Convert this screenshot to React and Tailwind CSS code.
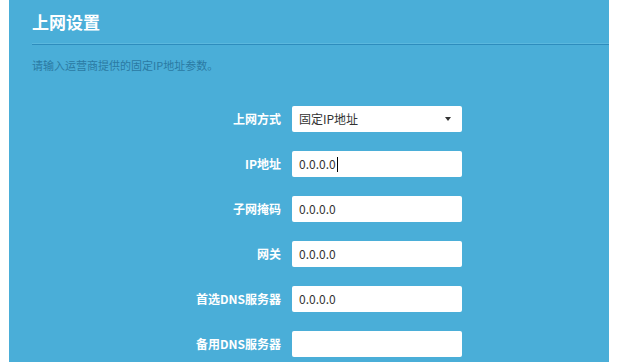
import React from "react";

const font = { fontFamily: '"Noto Sans CJK SC", "Noto Sans", sans-serif' };

function Row({ label, children }) {
  return (
    <div className="flex items-center h-[26px]">
      <div className="w-[249px] pr-0 text-right text-[12px] font-bold text-white leading-none">{label}</div>
      <div className="ml-[11px] w-[170px] h-[26px] bg-white rounded-[2px] flex items-center pl-[7px] text-[12px] text-[#333] relative">
        {children}
      </div>
    </div>
  );
}

export default function App() {
  return (
    <div className="bg-white w-[627px] h-[362px] overflow-hidden" style={font}>
      <div className="ml-[9px] w-[600px] h-[362px] bg-[#4aaed8]">
        <div className="pl-[23px]">
          <div className="h-[43px] flex items-center text-[17px] font-bold text-white tracking-[0px]">上网设置</div>
          <div className="h-[1px] bg-[#5bb8de]"></div>
          <div className="h-[1px] bg-[#2e8dbd]"></div>
          <div className="mt-[12px] text-[11px] leading-[16px] text-[#2a7aa3]">请输入运营商提供的固定IP地址参数。</div>
          <div className="mt-[33px] flex flex-col gap-[19px]">
            <Row label="上网方式">
              <span>固定IP地址</span>
              <span className="absolute right-[11px] top-[11px] w-0 h-0 border-l-[3px] border-r-[3px] border-t-[4px] border-l-transparent border-r-transparent border-t-[#333]"></span>
            </Row>
            <Row label="IP地址">
              <span>0.0.0.0</span>
              <span className="w-[1px] h-[15px] bg-black ml-[1px]"></span>
            </Row>
            <Row label="子网掩码">
              <span>0.0.0.0</span>
            </Row>
            <Row label="网关">
              <span>0.0.0.0</span>
            </Row>
            <Row label="首选DNS服务器">
              <span>0.0.0.0</span>
            </Row>
            <Row label="备用DNS服务器">
              <span></span>
            </Row>
          </div>
        </div>
      </div>
    </div>
  );
}
